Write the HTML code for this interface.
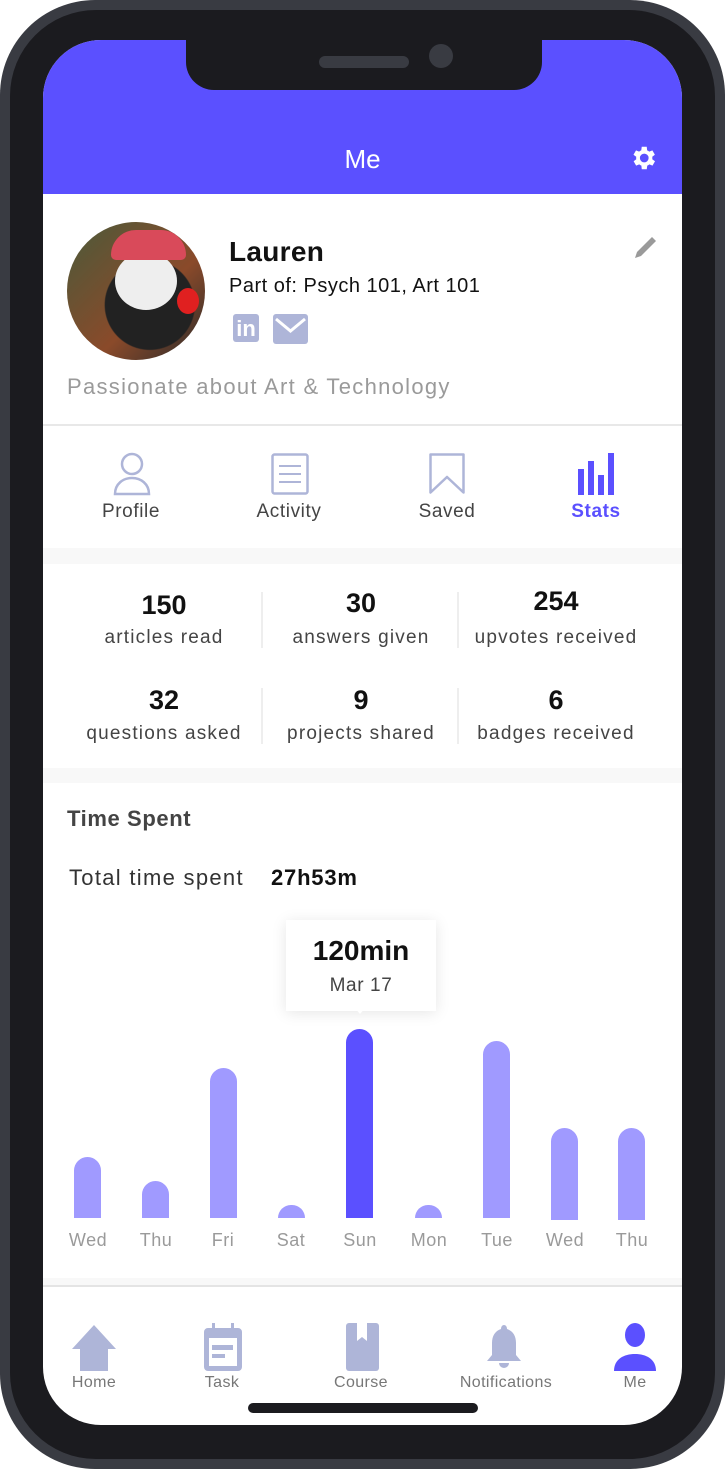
<!DOCTYPE html>
<html><head><meta charset="utf-8"><style>
*{margin:0;padding:0;box-sizing:border-box}
body{width:725px;height:1469px;background:#fff;font-family:"Liberation Sans",sans-serif;position:relative;overflow:hidden}
.frame{position:absolute;left:0;top:0;width:725px;height:1469px;border-radius:95px;background:#393b42}
.inner{position:absolute;left:10px;top:10px;width:705px;height:1449px;border-radius:86px;background:#1b1b1f}
.screen{position:absolute;left:43px;top:40px;width:639px;height:1385px;border-radius:58px;background:#fff;overflow:hidden}
.hdr{position:absolute;left:0;top:0;width:639px;height:154px;background:#5b50ff}
.notch{position:absolute;left:143px;top:0;width:356px;height:50px;background:#1b1b1f;border-radius:0 0 28px 28px}
.abs{position:absolute}
.t{position:absolute;white-space:nowrap}
.gap{position:absolute;left:0;width:639px;background:#f8f8f8}
.lbl{font-size:19px;color:#444;letter-spacing:0.6px}
.num{font-size:27px;color:#111;font-weight:bold;text-align:center;width:200px}
.sl{font-size:19px;color:#444;text-align:center;width:200px;letter-spacing:1.2px}
.bar{position:absolute;width:27px;background:#a09aff;border-radius:14px 14px 0 0}
.day{position:absolute;width:60px;text-align:center;font-size:18px;color:#9a9a9a;letter-spacing:0.5px}
.nav{position:absolute;font-size:16px;color:#777;text-align:center;width:120px;letter-spacing:0.4px}
</style></head><body>
<div class="frame"></div><div class="inner"></div>
<div class="screen">
 <div class="hdr"></div>
 <div class="notch"></div>
 <div class="abs" style="left:276px;top:16px;width:90px;height:12px;border-radius:6px;background:#393b42"></div>
 <div class="abs" style="left:386px;top:4px;width:24px;height:24px;border-radius:50%;background:#393b42"></div>
 <div class="t" style="left:0;width:639px;text-align:center;top:104px;font-size:26px;color:#fff">Me</div>
 <svg class="abs" style="left:585px;top:103px" width="30" height="30" viewBox="0 0 24 24"><path fill="#fff" d="M19.4 13a7.5 7.5 0 000-2l2.1-1.6-2-3.5-2.5 1a7 7 0 00-1.7-1L15 3h-4l-.4 2.9a7 7 0 00-1.7 1l-2.5-1-2 3.5L6.6 11a7.5 7.5 0 000 2l-2.1 1.6 2 3.5 2.5-1a7 7 0 001.7 1L11 21h4l.4-2.9a7 7 0 001.7-1l2.5 1 2-3.5zM13 15.5A3.5 3.5 0 1113 8.5a3.5 3.5 0 010 7z"/></svg>
</div>
<div class="abs" style="left:43px;top:40px;width:639px;height:1385px">
 <div class="abs" style="left:24px;top:182px;width:138px;height:138px;border-radius:50%;background:radial-gradient(circle at 60% 60%,#222 0 38%,transparent 39%),linear-gradient(135deg,#4a5a3a,#8a4a2a 60%,#2a2a2a)"></div>
 <div class="abs" style="left:72px;top:212px;width:62px;height:58px;border-radius:50%;background:#eee"></div>
 <div class="abs" style="left:68px;top:190px;width:75px;height:30px;border-radius:30px 30px 6px 6px;background:#d94a5a"></div>
 <div class="abs" style="left:134px;top:248px;width:22px;height:26px;border-radius:50%;background:#e02020"></div>
 <div class="t" style="left:186px;top:196px;font-size:28px;color:#111;font-weight:bold;letter-spacing:0.3px">Lauren</div>
 <div class="t" style="left:186px;top:235px;font-size:20px;color:#111;letter-spacing:0.5px">Part of: Psych 101, Art 101</div>
 <div class="abs" style="left:190px;top:274px;width:26px;height:28px;border-radius:3px;background:#aeb5d8;color:#fff;font-weight:bold;font-size:22px;text-align:center;line-height:30px">in</div>
 <svg class="abs" style="left:230px;top:274px" width="35" height="30" viewBox="0 0 35 30"><rect width="35" height="30" rx="3" fill="#aeb5d8"/><path d="M3 5l14.5 12L32 5" stroke="#fff" stroke-width="3" fill="none"/></svg>
 <svg class="abs" style="left:588px;top:194px" width="28" height="28" viewBox="0 0 28 28"><path d="M4 24l2-6L21 3l4 4-15 15z" fill="#9a9a9a"/></svg>
 <div class="t" style="left:24px;top:334px;font-size:22px;color:#9a9a9a;letter-spacing:1.3px">Passionate about Art &amp; Technology</div>
 <div class="abs" style="left:0;top:384px;width:639px;height:2px;background:#e8e8e8"></div>
 <svg class="abs" style="left:70px;top:412px" width="38" height="44" viewBox="0 0 38 44"><circle cx="19" cy="12" r="10" fill="none" stroke="#aeb5d8" stroke-width="2.5"/><path d="M2 42c0-10 8-16 17-16s17 6 17 16z" fill="none" stroke="#aeb5d8" stroke-width="2.5"/></svg>
 <svg class="abs" style="left:228px;top:413px" width="38" height="42" viewBox="0 0 38 42"><rect x="1.5" y="1.5" width="35" height="39" rx="2" fill="none" stroke="#aeb5d8" stroke-width="2.5"/><path d="M8 13h22M8 21h22M8 29h22" stroke="#aeb5d8" stroke-width="2"/></svg>
 <svg class="abs" style="left:386px;top:413px" width="36" height="42" viewBox="0 0 36 42"><path d="M1.5 1.5h33v38L18 24 1.5 39.5z" fill="none" stroke="#aeb5d8" stroke-width="2.5" stroke-linejoin="round"/></svg>
 <svg class="abs" style="left:535px;top:413px" width="36" height="42" viewBox="0 0 36 42"><path d="M0 16h6v26H0zM10 8h6v34h-6zM20 22h6v20h-6zM30 0h6v42h-6z" fill="#5b50ff"/></svg>
 <div class="t lbl" style="left:28px;top:461px;width:120px;text-align:center">Profile</div>
 <div class="t lbl" style="left:186px;top:461px;width:120px;text-align:center">Activity</div>
 <div class="t lbl" style="left:344px;top:461px;width:120px;text-align:center">Saved</div>
 <div class="t lbl" style="left:493px;top:461px;width:120px;text-align:center;color:#5b50ff;font-weight:bold">Stats</div>
 <div class="gap" style="top:508px;height:16px"></div>
 <div class="t num" style="left:21px;top:550px">150</div>
 <div class="t sl" style="left:21px;top:587px">articles read</div>
 <div class="t num" style="left:218px;top:548px">30</div>
 <div class="t sl" style="left:218px;top:587px">answers given</div>
 <div class="t num" style="left:413px;top:546px">254</div>
 <div class="t sl" style="left:413px;top:587px">upvotes received</div>
 <div class="t num" style="left:21px;top:645px">32</div>
 <div class="t sl" style="left:21px;top:683px">questions asked</div>
 <div class="t num" style="left:218px;top:645px">9</div>
 <div class="t sl" style="left:218px;top:683px">projects shared</div>
 <div class="t num" style="left:413px;top:645px">6</div>
 <div class="t sl" style="left:413px;top:683px">badges received</div>
 <div class="abs" style="left:218px;top:552px;width:2px;height:56px;background:#eee"></div>
 <div class="abs" style="left:414px;top:552px;width:2px;height:56px;background:#eee"></div>
 <div class="abs" style="left:218px;top:648px;width:2px;height:56px;background:#eee"></div>
 <div class="abs" style="left:414px;top:648px;width:2px;height:56px;background:#eee"></div>
 <div class="gap" style="top:728px;height:15px"></div>
 <div class="t" style="left:24px;top:766px;font-size:22px;color:#444;font-weight:bold;letter-spacing:0.6px">Time Spent</div>
 <div class="t" style="left:26px;top:825px;font-size:22px;color:#333;letter-spacing:1.3px">Total time spent</div>
 <div class="t" style="left:228px;top:825px;font-size:22px;color:#111;font-weight:bold;letter-spacing:0.8px">27h53m</div>
</div>
<div class="abs" style="left:0;top:0;width:725px;height:1469px">
 <div class="abs" style="left:286px;top:920px;width:150px;height:91px;background:#fff;box-shadow:0 2px 14px rgba(0,0,0,.1)"></div>
 <div class="abs" style="left:354px;top:1007px;width:0;height:0;border-left:6px solid transparent;border-right:6px solid transparent;border-top:7px solid #fff"></div>
 <div class="t" style="left:286px;top:935px;width:150px;text-align:center;font-size:28px;color:#111;font-weight:bold">120min</div>
 <div class="t" style="left:286px;top:975px;width:150px;text-align:center;font-size:19px;color:#444;letter-spacing:0.6px">Mar 17</div>
 <div class="bar" style="left:74px;top:1157px;height:61px"></div>
 <div class="bar" style="left:142px;top:1181px;height:37px"></div>
 <div class="bar" style="left:210px;top:1068px;height:150px"></div>
 <div class="bar" style="left:278px;top:1205px;height:13px"></div>
 <div class="bar" style="left:346px;top:1029px;height:189px;background:#5b50ff"></div>
 <div class="bar" style="left:415px;top:1205px;height:13px"></div>
 <div class="bar" style="left:483px;top:1041px;height:177px"></div>
 <div class="bar" style="left:551px;top:1128px;height:92px"></div>
 <div class="bar" style="left:618px;top:1128px;height:92px"></div>
 <div class="day" style="left:58px;top:1230px">Wed</div>
 <div class="day" style="left:126px;top:1230px">Thu</div>
 <div class="day" style="left:193px;top:1230px">Fri</div>
 <div class="day" style="left:261px;top:1230px">Sat</div>
 <div class="day" style="left:330px;top:1230px">Sun</div>
 <div class="day" style="left:399px;top:1230px">Mon</div>
 <div class="day" style="left:467px;top:1230px">Tue</div>
 <div class="day" style="left:535px;top:1230px">Wed</div>
 <div class="day" style="left:602px;top:1230px">Thu</div>
 <div class="abs" style="left:43px;top:1278px;width:639px;height:8px;background:#f8f8f8"></div>
 <div class="abs" style="left:43px;top:1285px;width:639px;height:2px;background:#e4e4e4"></div>
 <svg class="abs" style="left:70px;top:1323px" width="48" height="48" viewBox="0 0 48 48"><path d="M24 2L2 26h8v22h28V26h8z" fill="#aeb5d8"/></svg>
 <svg class="abs" style="left:204px;top:1323px" width="38" height="48" viewBox="0 0 38 48"><path d="M8 0h3v5h16V0h3v5h4a4 4 0 014 4v35a4 4 0 01-4 4H4a4 4 0 01-4-4V9a4 4 0 014-4h4z" fill="#aeb5d8"/><rect x="5" y="15" width="28" height="28" fill="#fff"/><rect x="8" y="22" width="21" height="5" fill="#aeb5d8"/><rect x="8" y="31" width="13" height="4" fill="#aeb5d8"/></svg>
 <svg class="abs" style="left:346px;top:1323px" width="33" height="48" viewBox="0 0 33 48"><path d="M3 0h27a3 3 0 013 3v42a3 3 0 01-3 3H3a3 3 0 01-3-3V3a3 3 0 013-3z" fill="#aeb5d8"/><path d="M11 0h10v18l-5-4-5 4z" fill="#fff"/></svg>
 <svg class="abs" style="left:487px;top:1323px" width="34" height="48" viewBox="0 0 34 48"><path d="M17 2c2 0 3 2 3 4 6 2 9 7 9 14v12l5 6H0l5-6V20c0-7 3-12 9-14 0-2 1-4 3-4zM12 40h10a5 5 0 01-10 0z" fill="#aeb5d8"/></svg>
 <svg class="abs" style="left:614px;top:1323px" width="42" height="48" viewBox="0 0 42 48"><ellipse cx="21" cy="12" rx="10" ry="12" fill="#5b50ff"/><path d="M0 48c0-12 10-17 21-17s21 5 21 17z" fill="#5b50ff"/></svg>
 <div class="nav" style="left:34px;top:1374px">Home</div>
 <div class="nav" style="left:162px;top:1374px">Task</div>
 <div class="nav" style="left:301px;top:1374px">Course</div>
 <div class="nav" style="left:446px;top:1374px">Notifications</div>
 <div class="nav" style="left:575px;top:1374px">Me</div>
 <div class="abs" style="left:248px;top:1403px;width:230px;height:10px;border-radius:5px;background:#1b1b1f"></div>
</div>
</body></html>
